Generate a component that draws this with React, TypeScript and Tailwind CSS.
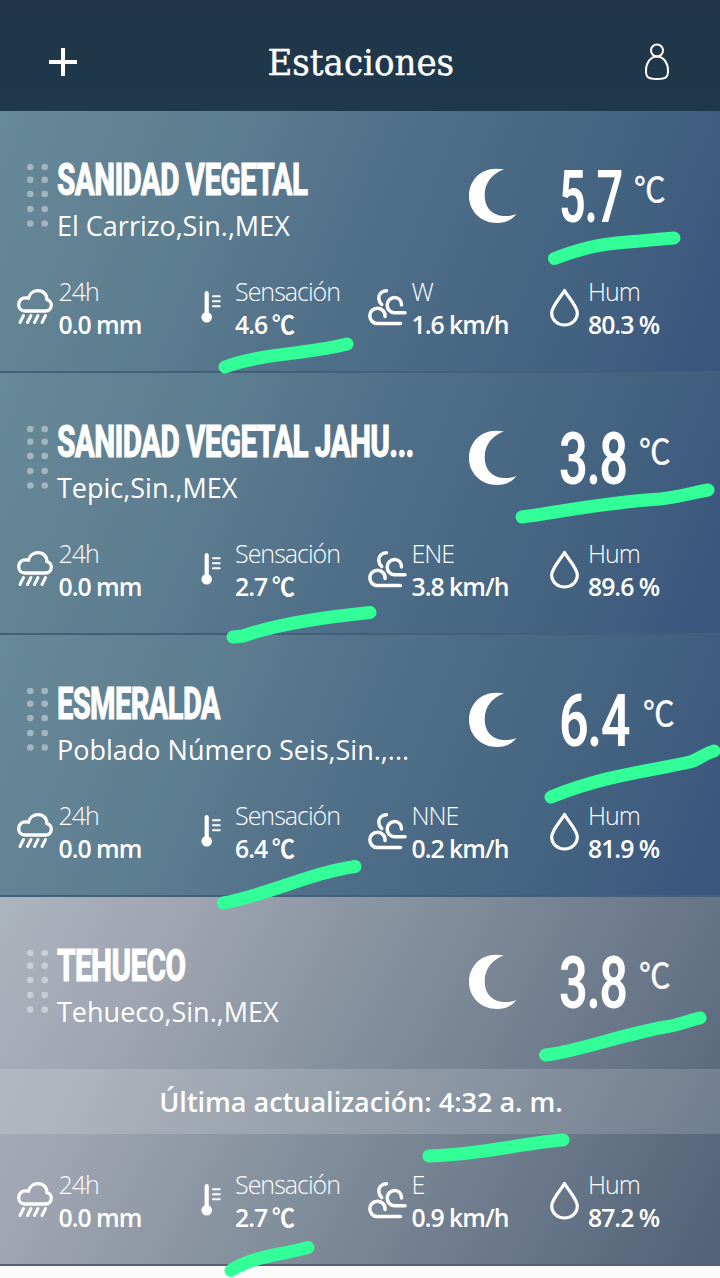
import type { ReactNode } from 'react'

interface Station {
  id: string
  name: string
  nameScale: string
  place: string
  temp: string
  tempScale: string
  tempWidth: string
  rain: string
  feels: string
  windDir: string
  wind: string
  humidity: string
  updatedAt?: string
}

const STATIONS: Station[] = [
  {
    id: 'sanidad-vegetal',
    name: 'SANIDAD VEGETAL',
    nameScale: 'scale-x-[0.675]',
    place: 'El Carrizo,Sin.,MEX',
    temp: '5.7',
    tempScale: 'scale-x-[0.65]',
    tempWidth: 'w-[75px]',
    rain: '0.0 mm',
    feels: '4.6',
    windDir: 'W',
    wind: '1.6 km/h',
    humidity: '80.3 %',
  },
  {
    id: 'sanidad-vegetal-jahuara',
    name: 'SANIDAD VEGETAL JAHU...',
    nameScale: 'scale-x-[0.677]',
    place: 'Tepic,Sin.,MEX',
    temp: '3.8',
    tempScale: 'scale-x-[0.7]',
    tempWidth: 'w-[80px]',
    rain: '0.0 mm',
    feels: '2.7',
    windDir: 'ENE',
    wind: '3.8 km/h',
    humidity: '89.6 %',
  },
  {
    id: 'esmeralda',
    name: 'ESMERALDA',
    nameScale: 'scale-x-[0.662]',
    place: 'Poblado Número Seis,Sin.,...',
    temp: '6.4',
    tempScale: 'scale-x-[0.725]',
    tempWidth: 'w-[84px]',
    rain: '0.0 mm',
    feels: '6.4',
    windDir: 'NNE',
    wind: '0.2 km/h',
    humidity: '81.9 %',
  },
  {
    id: 'tehueco',
    name: 'TEHUECO',
    nameScale: 'scale-x-[0.678]',
    place: 'Tehueco,Sin.,MEX',
    temp: '3.8',
    tempScale: 'scale-x-[0.7]',
    tempWidth: 'w-[80px]',
    rain: '0.0 mm',
    feels: '2.7',
    windDir: 'E',
    wind: '0.9 km/h',
    humidity: '87.2 %',
    updatedAt: '4:32 a. m.',
  },
]

const MARKS = [
  'M554.5 258.500 C590 245 610 243 640 241 C655 239.500 665 238.500 674 238',
  'M225 367 C262 353 310 354 347 344',
  'M522 517 C560 512 600 503 660 499 C680 497 695 492 708 490',
  'M233 637 L243 636 C280 623 325 617 370 612.5',
  'M551 797 C605 775 650 771 690 762 C697 760 706 753 714 751',
  'M223.5 903 C270 894 310 873 355 866.5',
  'M545.5 1055 C575 1052 620 1035 665 1027 C680 1025 690 1020 700 1018',
  'M429 1156 C490 1154 520 1143 563 1140',
  'M231 1270.5 C252 1257 270 1257 308 1247.5',
]

export default function App() {
  return (
    <div className="relative h-[1278px] w-[720px] overflow-hidden bg-[#fbfbfb] font-['Open_Sans',sans-serif] text-white">
      <Header />
      <main>
        {STATIONS.map((station) => (
          <StationCard key={station.id} station={station} />
        ))}
      </main>
      <svg className="pointer-events-none absolute inset-0" width="720" height="1278" viewBox="0 0 720 1278" fill="none">
        {MARKS.map((d) => (
          <path key={d} d={d} stroke="#33ff99" strokeWidth="13" strokeLinecap="round" strokeLinejoin="round" />
        ))}
      </svg>
    </div>
  )
}

function Header() {
  return (
    <header className="flex h-[111px] items-center justify-between bg-linear-to-b from-[#21364b] to-[#1f384a] pt-[13px] pr-[50px] pl-[49px]">
      <button type="button" aria-label="Agregar estación">
        <svg width="28" height="28" viewBox="0 0 28 28" stroke="currentColor" strokeWidth="4">
          <path d="M14 0V28M0 14H28" />
        </svg>
      </button>
      <h1 className="scale-x-[0.975] pt-px font-['DejaVu_Serif',serif] text-[35px] leading-[50px] [-webkit-text-stroke:0.4px_white]">Estaciones</h1>
      <button type="button" aria-label="Perfil">
        <svg width="26" height="38" viewBox="0 0 26 38" fill="none" stroke="currentColor" strokeWidth="2">
          <circle cx="13" cy="7.5" r="6" />
          <path d="M13 13.5C20 13.5 24 20.500 24 27.500C24 33.500 23 36 13 36C3 36 2 33.500 2 27.500C2 20.500 6 13.500 13 13.500Z" />
        </svg>
      </button>
    </header>
  )
}

function StationCard({ station }: { station: Station }) {
  const stale = Boolean(station.updatedAt)

  return (
    <section
      className={
        stale
          ? 'border-b-2 border-[#56616f] bg-[linear-gradient(117deg,#acb4be_0%,#9ea4b0_22%,#84909d_47%,#6f7c8d_70%,#506277_100%)]'
          : 'border-b-2 border-[#426079] bg-[linear-gradient(112deg,#688997_0%,#5e7e91_27%,#4f6e88_52%,#436280_80%,#3a547e_100%)]'
      }
    >
      <div className={stale ? 'flex h-[172px] items-start' : 'flex h-[164px] items-start'}>
        <Grip />
        <div className="w-[412px] pt-[43px]">
          <h2 className={`origin-left font-['Roboto',sans-serif] text-[44px] leading-[53px] font-extrabold tracking-[-1px] whitespace-nowrap [-webkit-text-stroke:0.8px_white] ${station.nameScale}`}>
            {station.name}
          </h2>
          <p className="pt-px text-[27px] leading-9 whitespace-nowrap">{station.place}</p>
        </div>
        <svg className="mt-[57px] shrink-0" width="48" height="56" viewBox="0 0 48 56" fill="currentColor">
          <path d="M35 1.500C14 -3 0 11 0 28C0 44 13 55 28 55C36 55 43 52 47.500 46C35 51 15.700 48 15.700 27C15.700 14 24 5 35 1.500Z" />
        </svg>
        <div className="mt-[47px] ml-[42px] flex items-start">
          <span className={`block ${station.tempWidth}`}>
            <span className={`block origin-left font-['Roboto',sans-serif] text-[72px] leading-[80px] font-semibold tracking-[-2px] ${station.tempScale}`}>
              {station.temp}
            </span>
          </span>
          <span className="mt-[10px] origin-left scale-x-[0.93] font-['Noto_Sans_CJK_JP',sans-serif] text-[34px] leading-[40px] font-normal [-webkit-text-stroke:0.4px_white]">℃</span>
        </div>
      </div>

      {station.updatedAt && (
        <p className="bg-white/15 pl-[2px] text-center text-[27px] leading-[65px] font-semibold">Última actualización: {station.updatedAt}</p>
      )}

      <div className={stale ? 'grid grid-cols-4 pt-[34px] pr-[7px] pb-[30px] pl-[7px]' : 'grid grid-cols-4 pr-[7px] pb-[30px] pl-[7px]'}>
        <Stat icon={<RainIcon />} label="24h">
          {station.rain}
        </Stat>
        <Stat icon={<ThermometerIcon />} label="Sensación">
          {station.feels} <span className="-ml-[1px] inline-block origin-left scale-x-[0.92] font-['Noto_Sans_CJK_JP',sans-serif] leading-none font-bold">℃</span>
        </Stat>
        <Stat icon={<WindIcon />} label={station.windDir}>
          {station.wind}
        </Stat>
        <Stat icon={<DropIcon />} label="Hum">
          {station.humidity}
        </Stat>
      </div>
    </section>
  )
}

function Stat({ icon, label, children }: { icon: ReactNode; label: string; children: ReactNode }) {
  return (
    <div className="flex">
      <span className="flex h-[66px] w-[52px] shrink-0 items-center justify-center pl-[3px]">{icon}</span>
      <div className="-ml-[0.5px] whitespace-nowrap">
        <p className="h-[33px] text-[25px] leading-[33px] font-light tracking-[-1px]">{label}</p>
        <p className="h-[33px] text-[24.8px] leading-[33px] font-semibold tracking-[-1px]">{children}</p>
      </div>
    </div>
  )
}

function Grip() {
  return (
    <svg className="mt-[52px] mr-[9px] ml-[27px] shrink-0" width="21" height="64" viewBox="0 0 21 64" fill="#fff" fillOpacity="0.4">
      {[4, 16.700, 31, 46, 60.500].map((cy) => (
        <g key={cy}>
          <circle cx="3.300" cy={cy} r="3.300" />
          <circle cx="17.700" cy={cy} r="3.300" />
        </g>
      ))}
    </svg>
  )
}

function RainIcon() {
  return (
    <svg className="-mt-[3px]" width="36" height="36" viewBox="0 0 36 36" fill="none" stroke="currentColor" strokeWidth="3.300" strokeLinecap="round" strokeLinejoin="round">
      <path d="M8 22C4 22 1.700 19 1.700 15.500C1.700 11.500 5 8.500 9 9C9.500 8.500 10 8.800 11.500 9.200C12.500 4.500 16.500 1.700 21 1.700C26.500 1.700 30 5.500 29.800 10.500C33 11.500 34.300 13.800 34.300 16C34.300 19.500 32 22 28.500 22Z" />
      <path d="M6.500 26.500L3 33.500M14 26.500L10.500 33.500M21 26.500L17.500 33.500M28.500 26.500L25 33.500" strokeWidth="3" />
    </svg>
  )
}

function ThermometerIcon() {
  return (
    <svg className="-mt-[2px]" width="20" height="32" viewBox="0 0 20 32" fill="none" stroke="currentColor" strokeLinecap="round">
      <path d="M5.700 2.200V24" strokeWidth="4.200" />
      <circle cx="5.700" cy="26.300" r="5.300" fill="currentColor" stroke="none" />
      <path d="M12 5.200H18.700M12 10.200H18.700M12 15.200H18.700" strokeWidth="2" />
    </svg>
  )
}

function WindIcon() {
  return (
    <svg className="-mt-[2px] -ml-[1px]" width="39" height="37" viewBox="0 0 39 37" fill="none" stroke="currentColor" strokeWidth="3.500" strokeLinecap="round" strokeLinejoin="round">
      <path d="M18.500 1.800C13.500 1.800 10.500 5.500 10.800 9.500C11 12 12 14 13.700 15.500" />
      <path d="M33.500 16C33.500 11.500 30.500 8.500 26.500 8.500C22.500 8.500 19.200 12 19.200 16C19.200 20 22 23.700 26.500 23.700H37" />
      <path d="M17 27.500C17.500 23 14 19.300 9.500 19.300C5 19.300 1.800 22.800 1.800 26.800C1.800 31 5 34.500 9 34.500H32.500" />
    </svg>
  )
}

function DropIcon() {
  return (
    <svg className="-mt-[2px]" width="29" height="39" viewBox="0 0 29 39" fill="none" stroke="currentColor" strokeWidth="3.200" strokeLinejoin="round">
      <path d="M14.500 2.500C11 9 1.700 18 1.700 25C1.700 32 7.500 37 14.500 37C21.500 37 27.300 32 27.300 25C27.300 18 18 9 14.500 2.500Z" />
    </svg>
  )
}
